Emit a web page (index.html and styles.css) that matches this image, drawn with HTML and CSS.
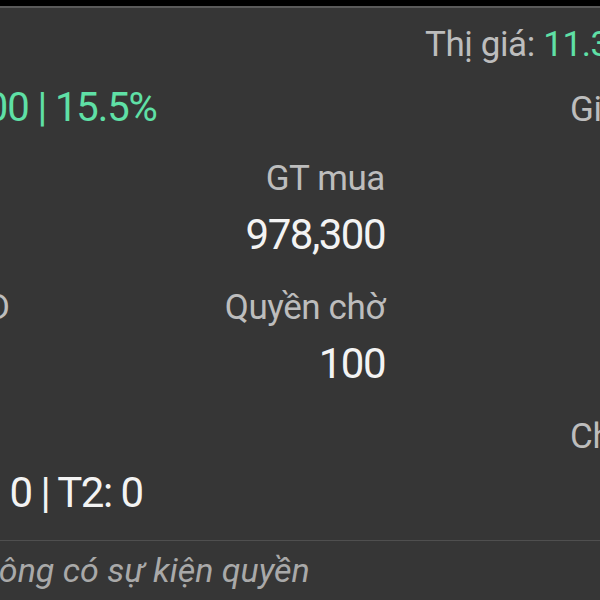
FILE: index.html
```html
<!DOCTYPE html>
<html lang="vi">
	<head>
		<meta charset="UTF-8">
		<title>Chi tiết danh mục</title>
		<link rel="stylesheet" href="styles.css">
	</head>
	<body>
		<div class="topbar"></div>
		<div class="sheet">
			<div class="grid">
				<!-- hàng 1 -->
				<div class="lbl">Lãi/lỗ</div>
				<div class="quote">Thị giá: <span class="up">11.35</span></div>
				<!-- hàng 2 -->
				<div class="val up">+ 1,145,900 | 15.5%</div>
				<div></div>
				<div class="lbl side low">Giá vốn</div>
				<!-- hàng 3 -->
				<div class="lbl">Tổng KL</div>
				<div class="lbl num">GT mua</div>
				<div></div>
				<!-- hàng 4 -->
				<div class="val">8,600</div>
				<div class="val num">978,300</div>
				<div></div>
				<!-- hàng 5 -->
				<div class="lbl">Lãi/Lỗ VND</div>
				<div class="lbl num">Quyền chờ</div>
				<div></div>
				<!-- hàng 6 -->
				<div class="val">0</div>
				<div class="val num">100</div>
				<div></div>
				<!-- hàng 7 -->
				<div class="lbl">Chờ về</div>
				<div></div>
				<div class="lbl side">Chờ bán</div>
				<!-- hàng 8 -->
				<div class="val">T0: 0 | T1: 0 | T2: 0</div>
				<div></div>
				<div></div>
			</div>
			<div class="divider"></div>
			<div class="note">Không có sự kiện quyền</div>
		</div>
	</body>
</html>
```

FILE: styles.css
```css
body{
	margin: 0;
	background-color: #363636;
	overflow: hidden;
	font-family: Roboto, "Noto Sans", sans-serif;
}
.topbar{
	height: 6px;
	background: #000;
	border-bottom: 2px solid #5a5a5a;
}
.sheet{
	width: 950px;
	margin-left: -165px;
	padding-top: 22px;
}
.grid{
	display: grid;
	grid-template-columns: 350px 200px 1fr;
	grid-template-rows: repeat(3, 51px 78px) 51px 50px;
	white-space: nowrap;
}
.lbl{
	font-size: 35px;
	line-height: 40px;
	letter-spacing: -0.4px;
	color: #bdbdbd;
}
.lbl.low{
	line-height: 58px;
}
.side{
	padding-left: 185px;
}
.val{
	font-size: 42px;
	line-height: 50px;
	letter-spacing: -1.5px;
	color: #f3f3f3;
}
.val.up{
	font-size: 40px;
	letter-spacing: -1.1px;
	padding-top: 2px;
}
.num{
	text-align: right;
}
.quote{
	grid-column: 2 / 4;
	padding-left: 240px;
	font-size: 35px;
	line-height: 30px;
	letter-spacing: -0.4px;
	color: #bdbdbd;
}
.up{
	color: #5fe0a6;
}
.divider{
	height: 1px;
	margin-top: 22px;
	background: #4f4f4f;
}
.note{
	padding: 9px 0 0 125px;
	font-size: 34px;
	line-height: 40px;
	font-style: italic;
	color: #a9a9a9;
}
```
